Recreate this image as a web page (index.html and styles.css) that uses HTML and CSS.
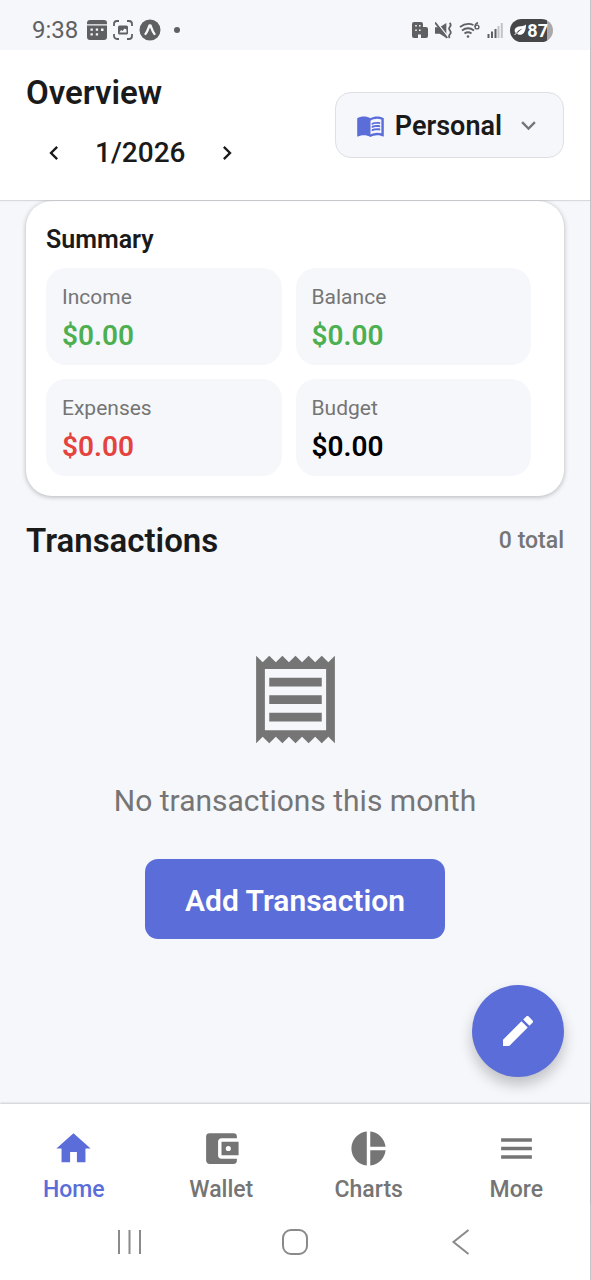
FILE: index.html
```html
<!DOCTYPE html>
<html lang="en">
<head>
<meta charset="utf-8">
<meta name="viewport" content="width=device-width, initial-scale=1">
<title>Overview</title>
<link rel="stylesheet" href="styles.css">
</head>
<body>
<div class="app">
  <div class="status-bar">
    <div class="status-group">
      <span class="clock">9:38</span>
      <svg width="20" height="20" viewBox="0 0 20 20" aria-hidden="true"><path fill="#606063" fill-rule="evenodd" d="M0 4.200V3A3 3 0 0 1 3 0H17A3 3 0 0 1 20 3V4.200ZM0 5.600H20V17A3 3 0 0 1 17 20H3A3 3 0 0 1 0 17ZM3.500 8.500V10.800H5.800V8.500ZM8.800 8.500V10.800H11.100V8.500ZM14 8.500V11H16.500V8.500ZM3.500 13.200V15.500H5.800V13.200ZM8.800 13.200V15.500H11.100V13.200Z"/></svg>
      <svg width="20" height="20" viewBox="0 0 20 20" aria-hidden="true"><path fill="none" stroke="#606063" stroke-width="1.800" d="M1 6V4A3 3 0 0 1 4 1H6M14 1H16A3 3 0 0 1 19 4V6M19 14V16A3 3 0 0 1 16 19H14M6 19H4A3 3 0 0 1 1 16V14"/><path fill="#606063" fill-rule="evenodd" d="M6.500 5.500H13.500A1.500 1.500 0 0 1 15 7V13A1.500 1.500 0 0 1 13.500 14.500H6.500A1.500 1.500 0 0 1 5 13V7A1.500 1.500 0 0 1 6.500 5.500ZM6.500 12.500H13.500V9.500L11.500 8.500L9.500 11L8 10Z"/></svg>
      <svg width="22" height="22" viewBox="0 0 22 22" aria-hidden="true"><circle cx="11" cy="11" r="10.500" fill="#606063"/><path fill="none" stroke="#f5f7fb" stroke-width="2.400" stroke-linecap="round" stroke-linejoin="round" d="M6.500 15C8.500 13 9.500 9 10.500 6.500H11.500C12.500 9 13.500 13 15.500 15"/></svg>
      <span class="more-dot"></span>
    </div>
    <div class="status-group status-right">
      <svg width="16" height="17" viewBox="0 0 16 17" aria-hidden="true"><path fill="#606063" fill-rule="evenodd" d="M2 0H9A2 2 0 0 1 11 2V5H14A2 2 0 0 1 16 7V14A2 2 0 0 1 14 16H9V12.500H6V16H2A2 2 0 0 1 0 14V2A2 2 0 0 1 2 0ZM3.200 3V4.600H4.800V3ZM7 3V4.600H8.600V3ZM3.200 7.500V9.100H4.800V7.500ZM7 7.500V9.100H8.600V7.500Z"/></svg>
      <svg width="17" height="17" viewBox="0 0 18 18" aria-hidden="true"><path fill="#606063" d="M0 5.500H5L12 1V17L5 12.500H0Z"/><path stroke="#f5f7fb" stroke-width="1.600" d="M1.500 0L14 16"/><path fill="none" stroke="#606063" stroke-width="1.900" d="M0 .5L13 17M15.500 1Q17.500 3 15.800 5T15.800 9T15.800 13T15.500 17"/></svg>
      <svg width="21" height="17" viewBox="0 0 21 17" aria-hidden="true"><path fill="none" stroke="#606063" stroke-width="1.800" d="M1 5Q7.500 0 14.500 3M3 8.500Q9 4 15 8.500M5.500 11.500Q9 9 12.500 11.500"/><circle cx="9" cy="14.500" r="1.300" fill="#606063"/><path fill="none" stroke="#606063" stroke-width="1.400" d="M19 .8Q16 1.500 16 5"/><circle cx="18" cy="5" r="1.900" fill="none" stroke="#606063" stroke-width="1.400"/></svg>
      <svg width="16" height="17" viewBox="0 0 16 17" aria-hidden="true"><path stroke="#606063" stroke-width="2" d="M1.500 12V16M5 9.500V16M8.500 7V16"/><path stroke="#c2c3c7" stroke-width="2" d="M11.500 4V16M14.800 1V16"/></svg>
      <span class="battery">
        <svg width="12" height="12" viewBox="0 0 12 12" aria-hidden="true"><path fill="#fff" d="M12 .5C12 7 9.500 11.500 5 10.800C3.500 10.500 3 9.800 3.500 9C5 7 7 6 8.500 4.500C6 5.300 3.500 7 2 9.300C-.5 7 .5 3.500 4.500 2.500C7.500 2 10 2 12 .5Z"/><path fill="none" stroke="#fff" d="M.5 11L3 8.500"/></svg>
        <span>87</span>
      </span>
    </div>
  </div>

  <header class="header">
    <div>
      <h1 class="title">Overview</h1>
      <div class="month-picker">
        <button class="icon-button" aria-label="Previous month"><svg width="28" height="28" viewBox="0 0 24 24" fill="#1a1a1a"><path d="M15.410 16.580L10.830 12L15.410 7.410L14 6L8 12L14 18Z"/></svg></button>
        <span class="month">1/2026</span>
        <button class="icon-button" aria-label="Next month"><svg width="28" height="28" viewBox="0 0 24 24" fill="#1a1a1a"><path d="M8.590 16.580L13.170 12L8.590 7.410L10 6L16 12L10 18Z"/></svg></button>
      </div>
    </div>
    <button class="book-select">
      <svg width="29" height="29" viewBox="0 0 24 24" fill="#5b6dd8" aria-hidden="true"><path fill-rule="evenodd" d="M23 6C21.500 4.900 19.450 4.500 17.500 4.500S13.450 4.900 12 6C10.550 4.900 8.450 4.500 6.500 4.500S2.450 4.900 1 6V20.650C1 20.900 1.250 21.150 1.500 21.150L1.750 21.100C3.100 20.450 5.050 20 6.500 20C8.450 20 10.550 20.400 12 21.500C13.350 20.650 15.800 20 17.500 20C19.150 20 20.850 20.300 22.250 21.050L22.500 21.100C22.750 21.100 23 20.850 23 20.600ZM21 18.500C19.900 18.150 18.700 18 17.500 18C15.800 18 13.350 18.650 12 19.500V8C13.350 7.150 15.800 6.500 17.500 6.500C18.700 6.500 19.900 6.650 21 7Z"/><path d="M17.500 10.500c.88 0 1.730.09 2.500.26V9.240c-.79-.15-1.640-.24-2.500-.24-1.700 0-3.240.29-4.500.83v1.660c1.130-.64 2.700-.99 4.500-.99zM13 12.490v1.660c1.130-.64 2.700-.99 4.500-.99.88 0 1.730.09 2.500.26V11.900c-.79-.15-1.640-.24-2.500-.24-1.700 0-3.240.3-4.500.83zM17.500 14.330c-1.700 0-3.240.29-4.500.83v1.660c1.130-.64 2.700-.99 4.500-.99.88 0 1.730.09 2.500.26v-1.520c-.79-.16-1.640-.24-2.500-.24z"/></svg>
      <span class="book-name">Personal</span>
      <svg width="29" height="29" viewBox="0 0 24 24" fill="#757575" aria-hidden="true"><path d="M7.410 8.580L12 13.170L16.590 8.580L18 10L12 16L6 10Z"/></svg>
    </button>
  </header>

  <main class="content">
    <section class="summary">
      <h2 class="summary-title">Summary</h2>
      <div class="tiles">
        <div class="tile"><span class="tile-label">Income</span><span class="tile-value positive">$0.00</span></div>
        <div class="tile"><span class="tile-label">Balance</span><span class="tile-value positive">$0.00</span></div>
        <div class="tile"><span class="tile-label">Expenses</span><span class="tile-value negative">$0.00</span></div>
        <div class="tile"><span class="tile-label">Budget</span><span class="tile-value">$0.00</span></div>
      </div>
    </section>

    <div class="list-header">
      <h2 class="list-title">Transactions</h2>
      <span class="list-count">0 total</span>
    </div>

    <div class="empty">
      <svg width="105" height="105" viewBox="0 0 24 24" fill="#757575" aria-hidden="true"><path fill-rule="evenodd" d="M19.500 3.500L18 2L16.500 3.500L15 2L13.500 3.500L12 2L10.500 3.500L9 2L7.500 3.500L6 2L4.500 3.500L3 2V22L4.500 20.500L6 22L7.500 20.500L9 22L10.500 20.500L12 22L13.500 20.500L15 22L16.500 20.500L18 22L19.500 20.500L21 22V2ZM19 19H5V5H19ZM6 15H18V17H6ZM6 11H18V13H6ZM6 7H18V9H6Z"/></svg>
      <p class="empty-text">No transactions this month</p>
      <button class="add-button">Add Transaction</button>
    </div>

    <button class="fab" aria-label="New transaction"><svg width="40" height="40" viewBox="0 0 24 24" fill="#fff"><path d="M20.710 7.040C21.100 6.650 21.100 6 20.710 5.630L18.370 3.290C18 2.900 17.350 2.900 16.960 3.290L15.120 5.120L18.870 8.870M3 17.250V21H6.750L17.810 9.930L14.060 6.180Z"/></svg></button>
  </main>

  <nav class="tabs">
    <a class="tab active" href="#home"><svg width="41" height="41" viewBox="0 0 24 24" fill="currentColor" aria-hidden="true"><path d="M10 20V14H14V20H19V12H22L12 3L2 12H5V20Z"/></svg>Home</a>
    <a class="tab" href="#wallet"><svg width="41" height="41" viewBox="0 0 24 24" fill="currentColor" aria-hidden="true"><path fill-rule="evenodd" d="M21 18V19A2 2 0 0 1 19 21H5C3.890 21 3 20.100 3 19V5A2 2 0 0 1 5 3H19A2 2 0 0 1 21 5V6H12C10.890 6 10 6.900 10 8V16A2 2 0 0 0 12 18ZM12 16H22V8H12ZM16 13.500A1.500 1.500 0 1 1 16 10.500A1.500 1.500 0 1 1 16 13.500Z"/></svg>Wallet</a>
    <a class="tab" href="#charts"><svg width="41" height="41" viewBox="0 0 24 24" fill="currentColor" aria-hidden="true"><path d="M11 2v20c-5.070-.5-9-4.790-9-10s3.930-9.500 9-10zm2.030 0v8.990H22c-.47-4.740-4.240-8.520-8.970-8.990zm0 11.010V22c4.740-.47 8.500-4.250 8.970-8.990h-8.970z"/></svg>Charts</a>
    <a class="tab" href="#more"><svg width="41" height="41" viewBox="0 0 24 24" fill="currentColor" aria-hidden="true"><path d="M3 6H21V8H3ZM3 11H21V13H3ZM3 16H21V18H3Z"/></svg>More</a>
  </nav>

  <div class="system-nav">
    <button class="system-button" aria-label="Recent apps"><svg width="28" height="28" viewBox="0 0 28 28" fill="none" stroke="#8a8a8a" stroke-width="2"><path d="M4 2V26M14.500 2V26M25 2V26"/></svg></button>
    <button class="system-button" aria-label="Home screen"><svg width="28" height="28" viewBox="0 0 28 28" fill="none" stroke="#8a8a8a" stroke-width="2"><rect x="2" y="2" width="24" height="24" rx="8"/></svg></button>
    <button class="system-button" aria-label="Back"><svg width="28" height="28" viewBox="0 0 28 28" fill="none" stroke="#8a8a8a" stroke-width="2"><path d="M21.500 2L6.500 14L21.500 26"/></svg></button>
  </div>
</div>
</body>
</html>
```
FILE: styles.css
```css
* {
  box-sizing: border-box;
}

body {
  margin: 0;
  background: #f5f7fb;
  color: #1a1a1a;
  font-family: Roboto, "Liberation Sans", sans-serif;
}

h1, h2, p {
  margin: 0;
}

button {
  margin: 0;
  padding: 0;
  border: 0;
  background: none;
  color: inherit;
  font: inherit;
  cursor: pointer;
}

svg {
  display: block;
  flex: none;
}

.app {
  display: flex;
  flex-direction: column;
  min-height: 100vh;
  border-right: 1px solid #c4c4c8;
}

.status-bar {
  display: flex;
  justify-content: space-between;
  align-items: center;
  height: 50px;
  padding: 10px 37px 0 32px;
}

.status-group {
  display: flex;
  align-items: center;
  gap: 6px;
}

.status-right {
  gap: 7px;
}

.clock {
  margin-right: 3px;
  color: #606063;
  font-size: 24px;
  line-height: 24px;
}

.more-dot {
  width: 6px;
  height: 6px;
  margin-left: 7px;
  border-radius: 50%;
  background: #606063;
}

.battery {
  display: flex;
  align-items: center;
  gap: 1px;
  height: 23px;
  padding: 0 5px 0 4px;
  border-radius: 12px;
  background: linear-gradient(to right, #464648 87%, #a9a9ac 87%);
  color: #fff;
  font-size: 18px;
  font-weight: 700;
  line-height: 23px;
}

.header {
  position: relative;
  z-index: 1;
  display: flex;
  justify-content: space-between;
  align-items: center;
  height: 150px;
  padding: 0 26px;
  background: #fff;
  box-shadow: 0 1px 1px rgba(0, 0, 0, 0.12);
}

.title {
  font-size: 33px;
  font-weight: 600;
  line-height: 40px;
}

.month-picker {
  display: flex;
  align-items: center;
  gap: 27px;
  margin-top: 20px;
  padding: 0 0 4px 14px;
}

.icon-button {
  width: 28px;
  height: 28px;
}

.month {
  font-size: 28px;
  font-weight: 500;
  line-height: 40px;
}

.book-select {
  display: flex;
  align-items: center;
  gap: 10px;
  height: 66px;
  padding: 0 20px;
  border: 1px solid #dfe0e4;
  border-radius: 16px;
  background: #f5f7fb;
}

.book-name {
  margin-right: 2px;
  padding-top: 2px;
  font-size: 27px;
  font-weight: 600;
  line-height: 36px;
}

.content {
  position: relative;
  flex: 1;
  padding: 0 26px;
}

.summary {
  margin-top: 1px;
  padding: 21px 33px 20px 20px;
  border-radius: 26px;
  background: #fff;
  box-shadow: 0 1px 5px rgba(0, 0, 0, 0.28);
}

.summary-title {
  margin-bottom: 10px;
  font-size: 25px;
  font-weight: 600;
  line-height: 36px;
}

.tiles {
  display: grid;
  grid-template-columns: 1fr 1fr;
  gap: 14px;
}

.tile {
  display: flex;
  flex-direction: column;
  gap: 9px;
  padding: 16px 16px 12px;
  border-radius: 20px;
  background: #f5f7fb;
}

.tile-label {
  color: #757575;
  font-size: 21px;
  line-height: 26px;
}

.tile-value {
  color: #000;
  font-size: 28px;
  font-weight: 600;
  line-height: 34px;
}

.positive {
  color: #4caf50;
}

.negative {
  color: #e5433d;
}

.list-header {
  display: flex;
  justify-content: space-between;
  align-items: center;
  margin-top: 25px;
}

.list-title {
  font-size: 33px;
  font-weight: 600;
  line-height: 40px;
}

.list-count {
  color: #757575;
  font-size: 23px;
  font-weight: 500;
  line-height: 30px;
}

.empty {
  display: flex;
  flex-direction: column;
  align-items: center;
  padding: 86px 0 40px;
}

.empty-text {
  margin: 29px 0 38px;
  color: #757575;
  font-size: 30px;
  line-height: 40px;
}

.add-button {
  height: 80px;
  padding: 2px 40px 0;
  border-radius: 13px;
  background: #5b6dd8;
  color: #fff;
  font-size: 30px;
  font-weight: 600;
}

.fab {
  position: absolute;
  right: 26px;
  bottom: 27px;
  display: grid;
  place-items: center;
  width: 92px;
  height: 92px;
  border-radius: 50%;
  background: #5b6dd8;
  box-shadow: 0 8px 14px rgba(0, 0, 0, 0.22);
}

.tabs {
  display: grid;
  grid-template-columns: repeat(4, 1fr);
  background: #fff;
  box-shadow: 0 -1px 2px rgba(0, 0, 0, 0.18);
  z-index: 1;
}

.tab {
  display: flex;
  flex-direction: column;
  align-items: center;
  gap: 6px;
  padding-top: 24px;
  color: #757575;
  font-size: 23px;
  font-weight: 500;
  line-height: 30px;
  text-decoration: none;
}

.active {
  color: #5b6dd8;
}

.system-nav {
  z-index: 1;
  display: flex;
  justify-content: center;
  gap: 138px;
  height: 75px;
  padding-top: 23px;
  background: #fff;
}

.system-button {
  width: 28px;
  height: 28px;
}
```
